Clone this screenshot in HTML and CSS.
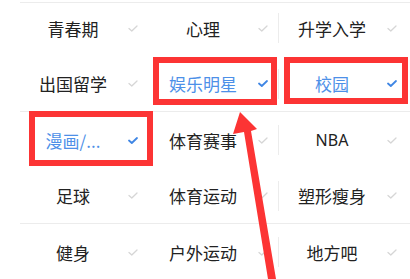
FILE: index.html
```html
<!DOCTYPE html>
<html lang="zh-CN">
<head>
    <meta charset="UTF-8">
    <meta name="viewport" content="width=device-width, initial-scale=1.0">
    <title>兴趣标签</title>
    <link rel="stylesheet" href="styles.css">
</head>
<body>

    <div class="page">
        <!-- Tag grid -->
        <div class="tags">
            <div class="row">
                <div class="cell"><span class="name">青春期</span><svg class="check" viewBox="0 0 10 7"><polyline points="1,3.5 3.8,6 9,1"/></svg></div>
                <div class="cell"><span class="name">心理</span><svg class="check" viewBox="0 0 10 7"><polyline points="1,3.5 3.8,6 9,1"/></svg></div>
                <div class="cell last"><i class="sep"></i><span class="name">升学入学</span><svg class="check" viewBox="0 0 10 7"><polyline points="1,3.5 3.8,6 9,1"/></svg></div>
            </div>
            <div class="row line">
                <div class="cell"><span class="name">出国留学</span><svg class="check" viewBox="0 0 10 7"><polyline points="1,3.5 3.8,6 9,1"/></svg></div>
                <div class="cell on"><span class="name">娱乐明星</span><svg class="check" viewBox="0 0 10 7"><polyline points="1,3.5 3.8,6 9,1"/></svg></div>
                <div class="cell last on"><i class="sep"></i><span class="name">校园</span><svg class="check" viewBox="0 0 10 7"><polyline points="1,3.5 3.8,6 9,1"/></svg></div>
            </div>
            <div class="row">
                <div class="cell on"><span class="name">漫画/...</span><svg class="check" viewBox="0 0 10 7"><polyline points="1,3.5 3.8,6 9,1"/></svg></div>
                <div class="cell"><span class="name">体育赛事</span><svg class="check" viewBox="0 0 10 7"><polyline points="1,3.5 3.8,6 9,1"/></svg></div>
                <div class="cell last"><i class="sep"></i><span class="name latin">NBA</span><svg class="check" viewBox="0 0 10 7"><polyline points="1,3.5 3.8,6 9,1"/></svg></div>
            </div>
            <div class="row line">
                <div class="cell"><span class="name">足球</span><svg class="check" viewBox="0 0 10 7"><polyline points="1,3.5 3.8,6 9,1"/></svg></div>
                <div class="cell"><span class="name">体育运动</span><svg class="check" viewBox="0 0 10 7"><polyline points="1,3.5 3.8,6 9,1"/></svg></div>
                <div class="cell last"><i class="sep"></i><span class="name">塑形瘦身</span><svg class="check" viewBox="0 0 10 7"><polyline points="1,3.5 3.8,6 9,1"/></svg></div>
            </div>
            <div class="row">
                <div class="cell"><span class="name">健身</span><svg class="check" viewBox="0 0 10 7"><polyline points="1,3.5 3.8,6 9,1"/></svg></div>
                <div class="cell"><span class="name">户外运动</span><svg class="check" viewBox="0 0 10 7"><polyline points="1,3.5 3.8,6 9,1"/></svg></div>
                <div class="cell last"><i class="sep"></i><span class="name">地方吧</span><svg class="check" viewBox="0 0 10 7"><polyline points="1,3.5 3.8,6 9,1"/></svg></div>
            </div>
        </div>

        <!-- Red annotation marks -->
        <div class="mark mark-star"></div>
        <div class="mark mark-campus"></div>
        <div class="mark mark-comic"></div>
        <svg class="arrow" viewBox="0 0 410 279">
            <polygon points="240,112 257,129 251,131 276,279 268,279 244,132 233,134"/>
        </svg>
    </div>

</body>
</html>
```

FILE: styles.css
```css
/* General */
body {
    margin: 0;
    background: #fff;
    font-family: "Noto Sans CJK SC", "Noto Sans", sans-serif;
    overflow: hidden;
}

.page {
    position: relative;
    width: 410px;
    height: 279px;
    overflow: hidden;
}

/* Tag grid */
.tags {
    margin: 2px 0 0 20px;
    border-top: 1px solid #ececec;
}

.row {
    display: grid;
    grid-template-columns: 130px 128px 132px;
    height: 56px;
}

.row:first-child {
    height: 50px;
    padding-bottom: 3px;
}

.row.line {
    border-bottom: 1px solid #ececec;
    height: 55px;
}

.cell {
    display: flex;
    align-items: center;
}

.sep {
    width: 1px;
    height: 30px;
    background: #ececec;
}

.name {
    width: 106px;
    text-align: center;
    font-size: 17px;
    color: #222;
    white-space: nowrap;
}

.name.latin {
    font-family: "Noto Sans", sans-serif;
    font-size: 16px;
}

.check {
    width: 10px;
    height: 7px;
    margin-left: 2px;
    fill: none;
    stroke: #d6d6d6;
    stroke-width: 1.3;
    stroke-linecap: round;
    stroke-linejoin: round;
}

.cell.on .name {
    color: #4d90e8;
}

.cell.on .check {
    stroke: #3f86e4;
    stroke-width: 1.8;
}

/* Annotations */
.mark {
    position: absolute;
    box-sizing: border-box;
    border: 6px solid #fc3434;
}

.mark-star {
    left: 153px;
    top: 57px;
    width: 124px;
    height: 48px;
}

.mark-campus {
    left: 284px;
    top: 57px;
    width: 124px;
    height: 47px;
}

.mark-comic {
    left: 29px;
    top: 111px;
    width: 124px;
    height: 55px;
}

.arrow {
    position: absolute;
    left: 0;
    top: 0;
    width: 410px;
    height: 279px;
    fill: #fc3434;
}
```
